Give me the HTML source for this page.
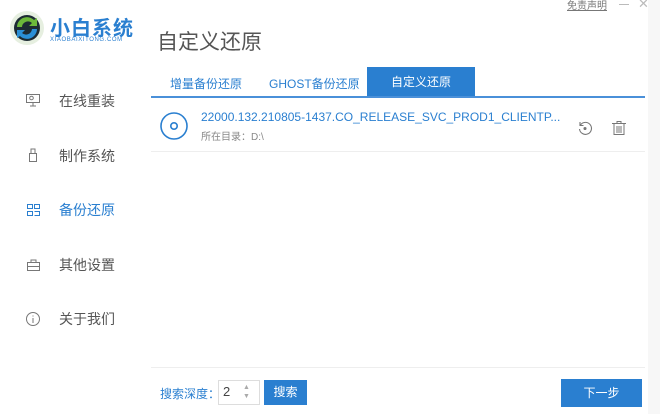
<!DOCTYPE html>
<html><head><meta charset="utf-8"><style>
*{margin:0;padding:0;box-sizing:border-box}
body{width:660px;height:414px;background:#fff;font-family:"Liberation Sans","Noto Sans CJK SC",sans-serif;position:relative;overflow:hidden;color:#555}
.a{position:absolute;white-space:nowrap}
.nav{font-size:14px;color:#555}
</style></head><body>
<div class="a" style="left:648px;top:0;width:12px;height:414px;background:#f7f7f7"></div>
<svg class="a" style="left:9px;top:10px" width="36" height="36" viewBox="0 0 36 36">
<circle cx="18" cy="18" r="17" fill="#e6efe0"/>
<circle cx="18" cy="18" r="13" fill="#1d2b33"/>
<path d="M8 17a10 10 0 0 1 17-7l3-2v8h-8l3-3a6 6 0 0 0-10 4z" fill="#6cb83a"/>
<path d="M28 19a10 10 0 0 1-17 7l-3 2v-8h8l-3 3a6 6 0 0 0 10-4z" fill="#2a8fd6"/>
</svg>
<div class="a" style="left:50px;top:12px;font-size:20px;font-weight:bold;color:#2a7fd0;letter-spacing:1px">小白系统</div>
<div class="a" style="left:50px;top:37px;font-size:6px;color:#2a7fd0;letter-spacing:0.6px">XIAOBAIXITONG.COM</div>
<div class="a" style="left:157px;top:26px;font-size:21px;color:#555">自定义还原</div>
<div class="a" style="left:567px;top:-3px;font-size:10px;color:#777;text-decoration:underline">免责声明</div>
<div class="a" style="left:619px;top:4px;width:10px;height:1px;background:#bbb"></div>
<div class="a" style="left:638px;top:-4px;font-size:13px;color:#bbb">✕</div>

<svg class="a" style="left:25px;top:93px" width="16" height="14" viewBox="0 0 16 14" fill="none" stroke="#777" stroke-width="1"><rect x="1.5" y="1.5" width="13" height="8"/><path d="M8 10v3M5 13h6"/><circle cx="6.5" cy="5" r="1.8"/></svg>
<div class="a nav" style="left:59px;top:91px">在线重装</div>
<svg class="a" style="left:27px;top:147px" width="12" height="16" viewBox="0 0 12 16" fill="none" stroke="#777"><rect x="2.5" y="6.5" width="7" height="8"/><path d="M4 6V2h4v4"/></svg>
<div class="a nav" style="left:59px;top:146px">制作系统</div>
<svg class="a" style="left:26px;top:203px" width="15" height="14" viewBox="0 0 15 14" fill="none" stroke="#2a7fd0"><rect x="1.5" y="1.5" width="5" height="4"/><rect x="8.5" y="1.5" width="5" height="4"/><rect x="1.5" y="8.5" width="5" height="4"/><path d="M8.5 8.5h5v4h-5"/></svg>
<div class="a nav" style="left:59px;top:200px;color:#2a7fd0">备份还原</div>
<svg class="a" style="left:26px;top:258px" width="15" height="14" viewBox="0 0 15 14" fill="none" stroke="#777"><rect x="1.5" y="4.5" width="12" height="8"/><path d="M5 4.5V2h5v2.5M1.5 8.5h12"/></svg>
<div class="a nav" style="left:59px;top:255px">其他设置</div>
<svg class="a" style="left:25px;top:311px" width="16" height="16" viewBox="0 0 16 16" fill="none" stroke="#777"><circle cx="8" cy="8" r="6.5"/><path d="M8 7v5M8 4.5v1"/></svg>
<div class="a nav" style="left:59px;top:309px">关于我们</div>

<div class="a" style="left:170px;top:75px;font-size:12px;color:#2a7fd0">增量备份还原</div>
<div class="a" style="left:269px;top:75px;font-size:12px;color:#2a7fd0">GHOST备份还原</div>
<div class="a" style="left:367px;top:67px;width:108px;height:30px;background:#2a7fd0;color:#fff;font-size:12px;text-align:center;line-height:30px">自定义还原</div>
<div class="a" style="left:151px;top:96px;width:494px;height:2px;background:#4a90d9"></div>

<svg class="a" style="left:159px;top:111px" width="30" height="30" viewBox="0 0 30 30" fill="none" stroke="#2a7fd0"><circle cx="15" cy="15" r="13" stroke-width="1.6"/><circle cx="15" cy="15" r="3.2" stroke-width="1.6"/></svg>
<div class="a" style="left:201px;top:110px;font-size:12px;color:#2a7fd0">22000.132.210805-1437.CO_RELEASE_SVC_PROD1_CLIENTP...</div>
<div class="a" style="left:201px;top:128px;font-size:10px;color:#888">所在目录：D:\</div>
<svg class="a" style="left:577px;top:120px" width="16" height="16" viewBox="0 0 16 16" fill="none" stroke="#777" stroke-width="1.1"><path d="M3.5 5A6 6 0 1 1 2.5 9"/><path d="M3 2v3.5h3.5"/><circle cx="8" cy="8.5" r="1" fill="#777"/></svg>
<svg class="a" style="left:611px;top:120px" width="16" height="16" viewBox="0 0 16 16" fill="none" stroke="#777" stroke-width="1"><path d="M1 3.5h14M6 3.5V1.5h4v2M3 3.5v11h10v-11M6 6v7M8 6v7M10 6v7"/></svg>
<div class="a" style="left:151px;top:151px;width:494px;height:1px;background:#eee"></div>

<div class="a" style="left:151px;top:367px;width:494px;height:1px;background:#eee"></div>
<div class="a" style="left:160px;top:385px;font-size:12px;color:#2a7fd0">搜索深度：</div>
<div class="a" style="left:218px;top:380px;width:42px;height:25px;border:1px solid #ddd;font-size:13px;color:#444;padding:3px 0 0 4px">2</div>
<div class="a" style="left:243px;top:383px;font-size:7px;color:#aaa;line-height:9px">▲<br>▼</div>
<div class="a" style="left:264px;top:380px;width:43px;height:25px;background:#2a7fd0;color:#fff;font-size:12px;text-align:center;line-height:25px">搜索</div>
<div class="a" style="left:561px;top:379px;width:81px;height:28px;background:#2a7fd0;color:#fff;font-size:12px;text-align:center;line-height:28px">下一步</div>
</body></html>
